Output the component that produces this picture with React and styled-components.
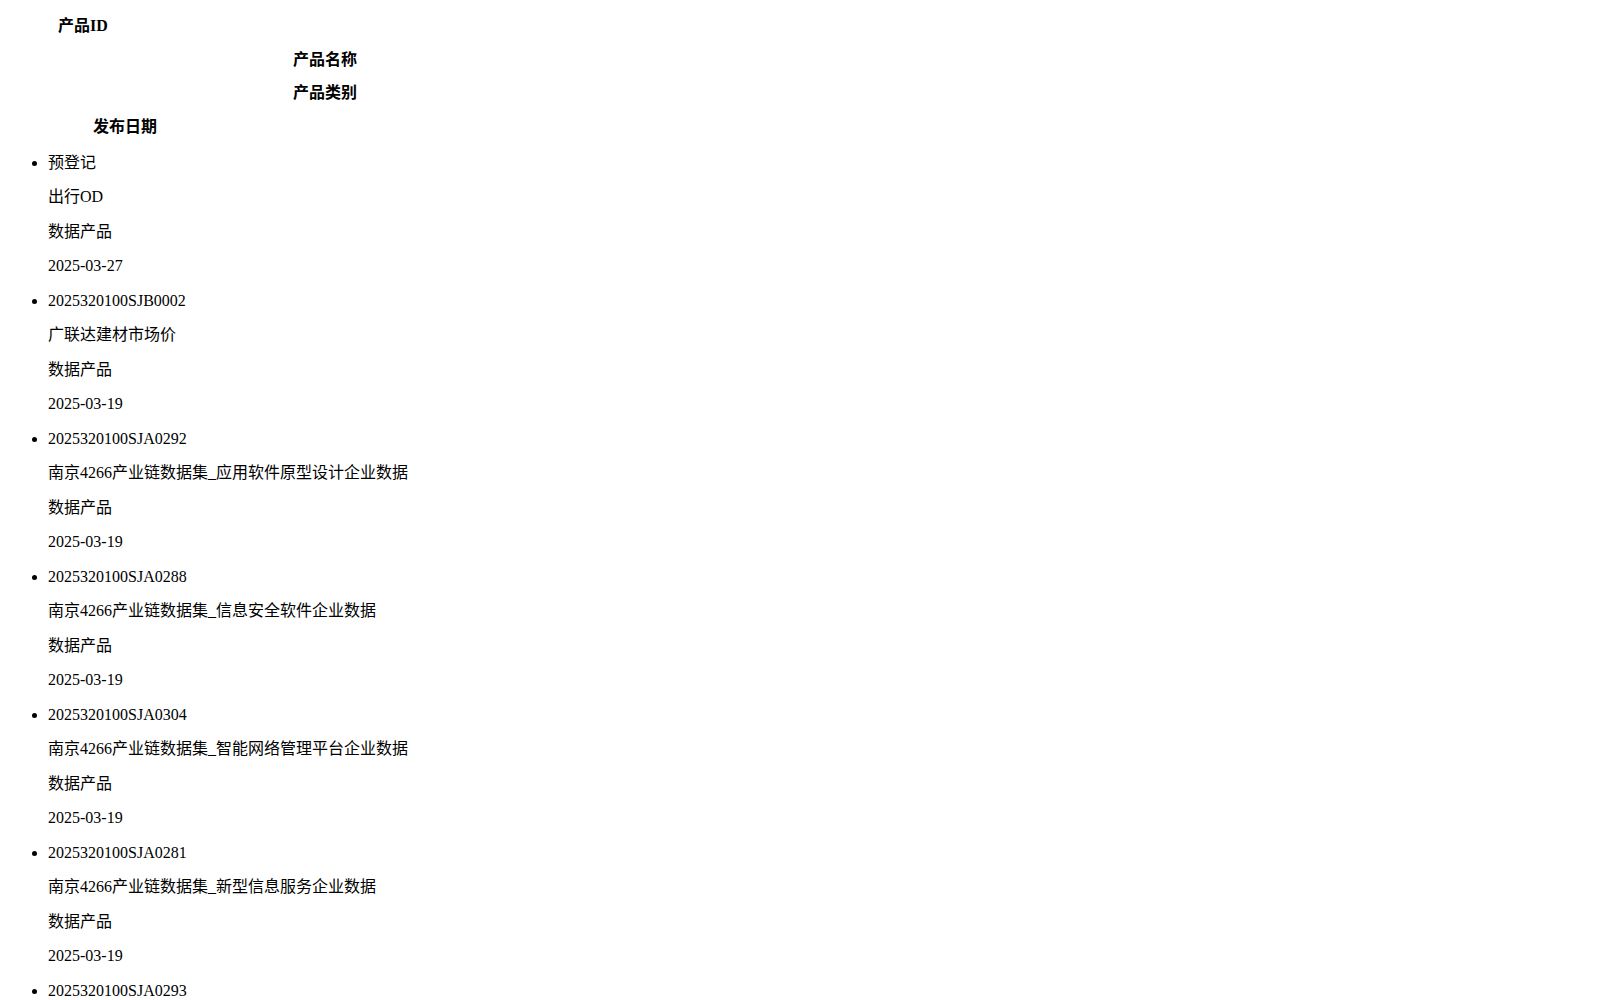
import styled, { createGlobalStyle } from "styled-components";

const GlobalStyle = createGlobalStyle`
    html {overflow-y:scroll;}
    html::-webkit-scrollbar {width:15px; background:#f0f0f0;}
    html::-webkit-scrollbar-thumb {background:#c0c0c0; border:2px solid #f0f0f0; border-top-width:0; border-bottom-width:0; background-clip:padding-box;}
    html::-webkit-scrollbar-button:single-button {display:block; height:13px; background:#f0f0f0;}
    body {margin:8px; background:#fff; color:#000; font-family:"Liberation Serif", "Noto Sans CJK SC", serif; font-size:16px;}
`;

const headers = [
    { label: "产品ID", width: 150 },
    { label: "产品名称", width: 634 },
    { label: "产品类别", width: 634 },
    { label: "发布日期", width: 234 },
];

const products = [
    { id: "预登记", name: "出行OD", type: "数据产品", date: "2025-03-27" },
    { id: "2025320100SJB0002", name: "广联达建材市场价", type: "数据产品", date: "2025-03-19" },
    { id: "2025320100SJA0292", name: "南京4266产业链数据集_应用软件原型设计企业数据", type: "数据产品", date: "2025-03-19" },
    { id: "2025320100SJA0288", name: "南京4266产业链数据集_信息安全软件企业数据", type: "数据产品", date: "2025-03-19" },
    { id: "2025320100SJA0304", name: "南京4266产业链数据集_智能网络管理平台企业数据", type: "数据产品", date: "2025-03-19" },
    { id: "2025320100SJA0281", name: "南京4266产业链数据集_新型信息服务企业数据", type: "数据产品", date: "2025-03-19" },
    { id: "2025320100SJA0293", name: "南京4266产业链数据集_工业软件企业数据", type: "数据产品", date: "2025-03-19" },
    { id: "2025320100SJA0290", name: "南京4266产业链数据集_嵌入式软件企业数据", type: "数据产品", date: "2025-03-19" },
    { id: "2025320100SJA0286", name: "南京4266产业链数据集_云计算服务企业数据", type: "数据产品", date: "2025-03-19" },
    { id: "2025320100SJA0301", name: "南京4266产业链数据集_大数据平台企业数据", type: "数据产品", date: "2025-03-19" },
    { id: "2025320100SJA0279", name: "南京4266产业链数据集_人工智能企业数据", type: "数据产品", date: "2025-03-19" },
    { id: "2025320100SJA0284", name: "南京4266产业链数据集_集成电路设计企业数据", type: "数据产品", date: "2025-03-19" },
    { id: "2025320100SJA0297", name: "南京4266产业链数据集_物联网应用企业数据", type: "数据产品", date: "2025-03-19" },
    { id: "2025320100SJA0283", name: "南京4266产业链数据集_软件测试服务企业数据", type: "数据产品", date: "2025-03-19" },
];

const App = () => {
    return (
        <>
            <GlobalStyle />
            <Header>
                {headers.map((h) => (
                    <HeaderCell key={h.label} $width={h.width}>{h.label}</HeaderCell>
                ))}
            </Header>
            <ProductList>
                {products.map((item) => (
                    <ProductItem key={item.id}>
                        <Field>{item.id}</Field>
                        <Field>{item.name}</Field>
                        <Field>{item.type}</Field>
                        <Field>{item.date}</Field>
                    </ProductItem>
                ))}
            </ProductList>
        </>
    )
}

const Header = styled.div`
    margin-top:-7px;
`;

const HeaderCell = styled.p`
    width:${(p) => p.$width}px;
    margin:16px 0;
    line-height:17.7px;
    font-weight:bold;
    text-align:center;
`;

const ProductList = styled.ul`
    margin:18px 0 16px;
    padding-left:40px;
    list-style:disc;
`;

const ProductItem = styled.li``;

const Field = styled.p`
    margin:16px 0;
    line-height:18.5px;
`;

export default App
